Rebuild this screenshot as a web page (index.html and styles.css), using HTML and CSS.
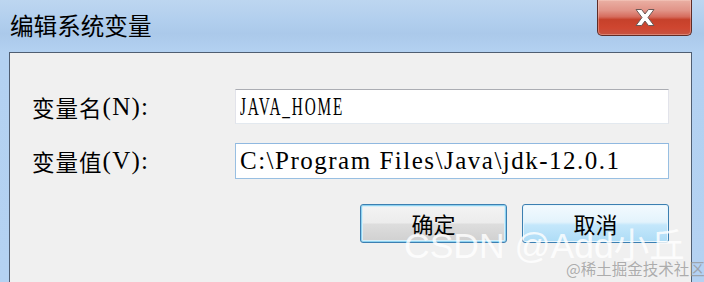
FILE: index.html
```html
<!DOCTYPE html>
<html lang="zh-CN">
<head>
<meta charset="utf-8">
<title>编辑系统变量</title>
<link rel="stylesheet" href="styles.css">
</head>
<body>
<div class="window">
  <div class="titlebar">
    <div class="title">编辑系统变量</div>
    <div class="close">
      <svg width="22" height="19" viewBox="0 0 22 19">
        <path d="M2 1.5 H7.6 L11 6 L14.4 1.5 H20 L14 9.5 L20 17.5 H14.4 L11 13 L7.6 17.5 H2 L8 9.5 Z" fill="#ffffff" stroke="#6a5a58" stroke-width="1" stroke-linejoin="round"/>
      </svg>
    </div>
  </div>
  <div class="panel">
    <div class="row">
      <div class="label"><span class="cjk">变量名</span><span class="latin">(N):</span></div>
      <div class="input"><span class="value condensed">JAVA_HOME</span></div>
    </div>
    <div class="row row2">
      <div class="label"><span class="cjk">变量值</span><span class="latin">(V):</span></div>
      <div class="input focus"><span class="value spaced">C:\Program Files\Java\jdk-12.0.1</span></div>
    </div>
    <div class="buttons">
      <div class="btn default">确定</div>
      <div class="btn hover">取消</div>
    </div>
  </div>
  <div class="frame-bottom"></div>
  <div class="shadow"></div>
  <div class="wm-big">CSDN @Add小丘</div>
  <div class="wm-small">@稀土掘金技术社区</div>
</div>
</body>
</html>
```
FILE: styles.css
```css
html, body {
  margin: 0;
  padding: 0;
}
body {
  width: 704px;
  height: 282px;
  overflow: hidden;
  font-family: "Noto Sans CJK SC", sans-serif;
}
.window {
  position: relative;
  width: 704px;
  height: 282px;
  display: flex;
  flex-direction: column;
  background: linear-gradient(to bottom, #bdd6f0 0px, #b2cfee 20px, #abc9ea 34px, #b3d1f1 52px, #b4d2f2 100%);
  overflow: hidden;
}
.titlebar {
  height: 52px;
  flex: none;
  display: flex;
  justify-content: space-between;
  align-items: flex-start;
  padding: 0 12px 0 10px;
}
.title {
  margin-top: 9px;
  font-size: 23.6px;
  line-height: 32px;
  color: #000;
}
.close {
  width: 93px;
  height: 35px;
  border: 1px solid #5e2c27;
  border-top: none;
  border-radius: 0 0 5px 5px;
  background: linear-gradient(to bottom, #eab0a4 0%, #e19387 30%, #d66c5d 48%, #c6412b 56%, #cf4630 80%, #c65442 100%);
  box-shadow: inset 0 0 0 1px rgba(255, 220, 210, 0.35);
  display: flex;
  align-items: center;
  justify-content: center;
}
.close svg {
  display: block;
  margin-top: -1px;
}
.panel {
  flex: none;
  width: 637px;
  height: 213px;
  margin: 0 12px 0 9px;
  border: 1px solid #4f5e72;
  background: #f0f0f0;
  padding: 36px 22px 0 22px;
}
.row {
  display: flex;
  align-items: center;
  height: 35px;
}
.row2 {
  margin-top: 19px;
  height: 36px;
}
.label {
  width: 203px;
  flex: none;
  color: #000;
  display: flex;
  align-items: center;
  height: 100%;
}
.cjk {
  font-family: "Noto Sans CJK SC", sans-serif;
  font-size: 22.5px;
  letter-spacing: 1px;
}
.latin {
  font-family: "Liberation Serif", serif;
  font-size: 25px;
  letter-spacing: 1.3px;
}
.input {
  flex: none;
  width: 434px;
  height: 35px;
  box-sizing: border-box;
  background: #fff;
  border: 1px solid #e2e3ea;
  border-top-color: #abadb3;
  border-bottom-color: #e3e9ef;
  display: flex;
  align-items: center;
  padding-left: 4px;
  white-space: nowrap;
  overflow: hidden;
}
.input.focus {
  height: 36px;
  border-color: #98bfe2;
  border-top-color: #8fb8e0;
}
.value {
  font-family: "Liberation Serif", serif;
  font-size: 25px;
  color: #000;
  display: inline-block;
  transform-origin: left center;
}
.value.condensed {
  letter-spacing: 3px;
  transform: scaleX(0.61);
}
.value.spaced {
  letter-spacing: 1.5px;
}
.buttons {
  display: flex;
  justify-content: flex-end;
  gap: 15px;
  margin-top: 25px;
}
.btn {
  width: 147px;
  height: 39px;
  box-sizing: border-box;
  border: 1px solid #3c7fb1;
  border-radius: 3px;
  display: flex;
  align-items: center;
  justify-content: center;
  font-size: 22px;
  color: #000;
  padding-bottom: 2px;
}
.btn.default {
  background: linear-gradient(to bottom, #f4f4f4 0%, #ececec 48%, #dddddd 52%, #d0d0d0 100%);
  box-shadow: inset 0 0 0 1px #8ed2f0, inset 0 0 0 2px #d7eef8;
}
.btn.hover {
  background: linear-gradient(to bottom, #f3fafe 0%, #e3f3fc 46%, #c4e7fb 54%, #addcf6 100%);
  box-shadow: inset 0 0 0 1px #e6f5fd;
}
.frame-bottom {
  flex: none;
  height: 11px;
  background: linear-gradient(to bottom, #b5d3f3, #a9c9ec);
}
.shadow {
  flex: none;
  height: 4px;
  background: linear-gradient(to bottom, #4a4f55, #2f3236);
}
.wm-big {
  position: absolute;
  left: 404px;
  top: 225px;
  font-family: "Liberation Sans", "Noto Sans CJK SC", sans-serif;
  font-size: 35.5px;
  line-height: 42px;
  color: rgba(255, 255, 255, 0.82);
  white-space: nowrap;
}
.wm-small {
  position: absolute;
  left: 566px;
  top: 258px;
  font-family: "Noto Sans CJK SC", sans-serif;
  font-size: 15.5px;
  line-height: 20px;
  color: rgba(150, 150, 150, 0.75);
  white-space: nowrap;
}
```
